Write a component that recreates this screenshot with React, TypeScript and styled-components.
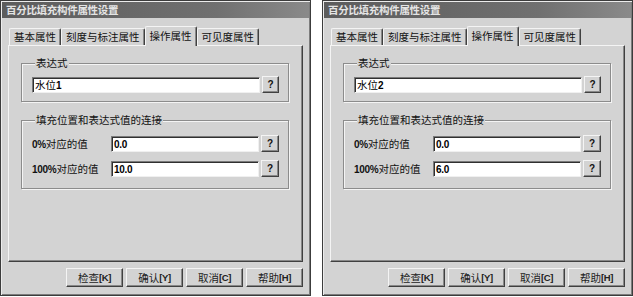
import styled, { createGlobalStyle } from "styled-components";

const GlobalStyle = createGlobalStyle`
  html, body {
    margin: 0;
    padding: 0;
    background: #ffffff;
  }
  body {
    font-family: "Noto Sans CJK SC", "DejaVu Sans", sans-serif;
  }
`

const Page = styled.div`
  display: flex;
  gap: 11px;
  width: 633px;
  height: 297px;
`

const Window = styled.div`
  width: 311px;
  height: 296px;
  box-sizing: border-box;
  padding: 1px;
  background: #d3d3d3;
  border: 1px solid #3c3c3c;
  box-shadow: inset 1px 1px 0 #ececec, inset -1px -1px 0 #7c7c7c;
  display: flex;
  flex-direction: column;
`

const TitleBar = styled.div`
  height: 16px;
  display: flex;
  align-items: center;
  padding-left: 4px;
  background: linear-gradient(to right, #5c5c5c 0%, #707070 70%, #8a8a8a 100%);
  color: #e4e4e4;
  font-size: 10.5px;
  font-weight: 700;
  line-height: 16px;
  letter-spacing: -0.3px;
`

const Body = styled.div`
  flex: 1;
  display: flex;
  flex-direction: column;
  padding: 8px 6px 0 6px;
`

const TabRow = styled.div`
  display: flex;
  align-items: flex-end;
  height: 19px;
  padding-left: 1px;
  position: relative;
  z-index: 1;
`

const Tab = styled.div<{ $active?: boolean }>`
  box-sizing: border-box;
  height: ${p => (p.$active ? "20px" : "17px")};
  margin-bottom: ${p => (p.$active ? "-1px" : "0")};
  padding: ${p => (p.$active ? "1px 4px 0" : "0 4px")};
  background: #d3d3d3;
  border-top: 1px solid #f4f4f4;
  border-left: 1px solid #f4f4f4;
  border-right: 1px solid #404040;
  box-shadow: inset -1px 0 0 #888888;
  border-radius: 2px 2px 0 0;
  font-size: 10.5px;
  line-height: 15px;
  color: #111;
  white-space: nowrap;
`

const Panel = styled.div`
  height: 217px;
  box-sizing: border-box;
  border-top: 1px solid #f4f4f4;
  border-left: 1px solid #f4f4f4;
  border-right: 1px solid #404040;
  border-bottom: 1px solid #404040;
  box-shadow: inset -1px -1px 0 #888888;
  padding: 11px 13px 0 12px;
  display: flex;
  flex-direction: column;
  gap: 12px;
`

const Group = styled.fieldset<{ $top: number; $bottom: number }>`
  margin: 0;
  padding: ${p => p.$top}px 9px ${p => p.$bottom}px 10px;
  border: 1px solid #8c8c8c;
  box-shadow: inset 1px 1px 0 #f4f4f4, 1px 1px 0 #f4f4f4;
  display: flex;
  flex-direction: column;
  gap: 8px;
`

const Legend = styled.legend`
  margin-left: 3px;
  padding: 0 1px;
  background: #d3d3d3;
  font-size: 10.5px;
  line-height: 12px;
  color: #111;
`

const Row = styled.div<{ $label?: boolean }>`
  display: grid;
  grid-template-columns: ${p => (p.$label ? "77px 1fr 18px" : "1fr 17px")};
  column-gap: 2px;
  align-items: center;
`

const Label = styled.div`
  font-size: 10.5px;
  color: #111;
  padding-left: 0;
  white-space: nowrap;
`

const Num = styled.span`
  font-family: "Liberation Sans", Arial, sans-serif;
  font-weight: 700;
  font-size: 10px;
  letter-spacing: -0.3px;
`

const Field = styled.div`
  height: 16px;
  box-sizing: border-box;
  background: #ffffff;
  border-top: 1px solid #7a7a7a;
  border-left: 1px solid #7a7a7a;
  border-right: 1px solid #f0f0f0;
  border-bottom: 1px solid #f0f0f0;
  box-shadow: inset 1px 1px 0 #303030;
  padding: 0 2px;
  font-size: 10.5px;
  line-height: 14px;
  color: #000;
  white-space: nowrap;
`

const HelpButton = styled.div`
  height: 17px;
  box-sizing: border-box;
  background: #d3d3d3;
  border-top: 1px solid #f4f4f4;
  border-left: 1px solid #f4f4f4;
  border-right: 1px solid #404040;
  border-bottom: 1px solid #404040;
  box-shadow: inset -1px -1px 0 #888888;
  display: flex;
  align-items: center;
  justify-content: center;
  font-family: "Liberation Sans", Arial, sans-serif;
  font-weight: 700;
  font-size: 10px;
  color: #111;
`

const ButtonBar = styled.div`
  display: flex;
  justify-content: flex-end;
  gap: 3px;
  margin-top: 6px;
  padding-right: 0;
`

const DialogButton = styled.div`
  width: 57px;
  height: 19px;
  box-sizing: border-box;
  background: #d3d3d3;
  border-top: 1px solid #f4f4f4;
  border-left: 1px solid #f4f4f4;
  border-right: 1px solid #404040;
  border-bottom: 1px solid #404040;
  box-shadow: inset -1px -1px 0 #888888;
  display: flex;
  align-items: center;
  justify-content: center;
  font-size: 10.5px;
  color: #222;
  white-space: nowrap;
`

const Key = styled.span`
  font-family: "Liberation Sans", Arial, sans-serif;
  font-weight: 700;
  font-size: 9.5px;
  letter-spacing: -0.4px;
`

const tabs = ["基本属性", "刻度与标注属性", "操作属性", "可见度属性"]
const buttons = [
  { text: "检查", key: "K" },
  { text: "确认", key: "Y" },
  { text: "取消", key: "C" },
  { text: "帮助", key: "H" },
]

type DialogProps = { exprName: string; exprNum: string; v0: string; v100: string }

const Dialog = ({ exprName, exprNum, v0, v100 }: DialogProps) => (
  <Window>
    <TitleBar>百分比填充构件属性设置</TitleBar>
    <Body>
      <TabRow>
        {tabs.map(t => (
          <Tab key={t} $active={t === "操作属性"}>{t}</Tab>
        ))}
      </TabRow>
      <Panel>
        <Group $top={7} $bottom={8}>
          <Legend>表达式</Legend>
          <Row>
            <Field>{exprName}<Num>{exprNum}</Num></Field>
            <HelpButton>?</HelpButton>
          </Row>
        </Group>
        <Group $top={9} $bottom={11}>
          <Legend>填充位置和表达式值的连接</Legend>
          <Row $label>
            <Label><Num>0%</Num>对应的值</Label>
            <Field><Num>{v0}</Num></Field>
            <HelpButton>?</HelpButton>
          </Row>
          <Row $label>
            <Label><Num>100%</Num>对应的值</Label>
            <Field><Num>{v100}</Num></Field>
            <HelpButton>?</HelpButton>
          </Row>
        </Group>
      </Panel>
      <ButtonBar>
        {buttons.map(b => (
          <DialogButton key={b.key}>{b.text}<Key>[{b.key}]</Key></DialogButton>
        ))}
      </ButtonBar>
    </Body>
  </Window>
)

export default function App() {
  return (
    <>
      <GlobalStyle />
      <Page>
        <Dialog exprName="水位" exprNum="1" v0="0.0" v100="10.0" />
        <Dialog exprName="水位" exprNum="2" v0="0.0" v100="6.0" />
      </Page>
    </>
  )
}
